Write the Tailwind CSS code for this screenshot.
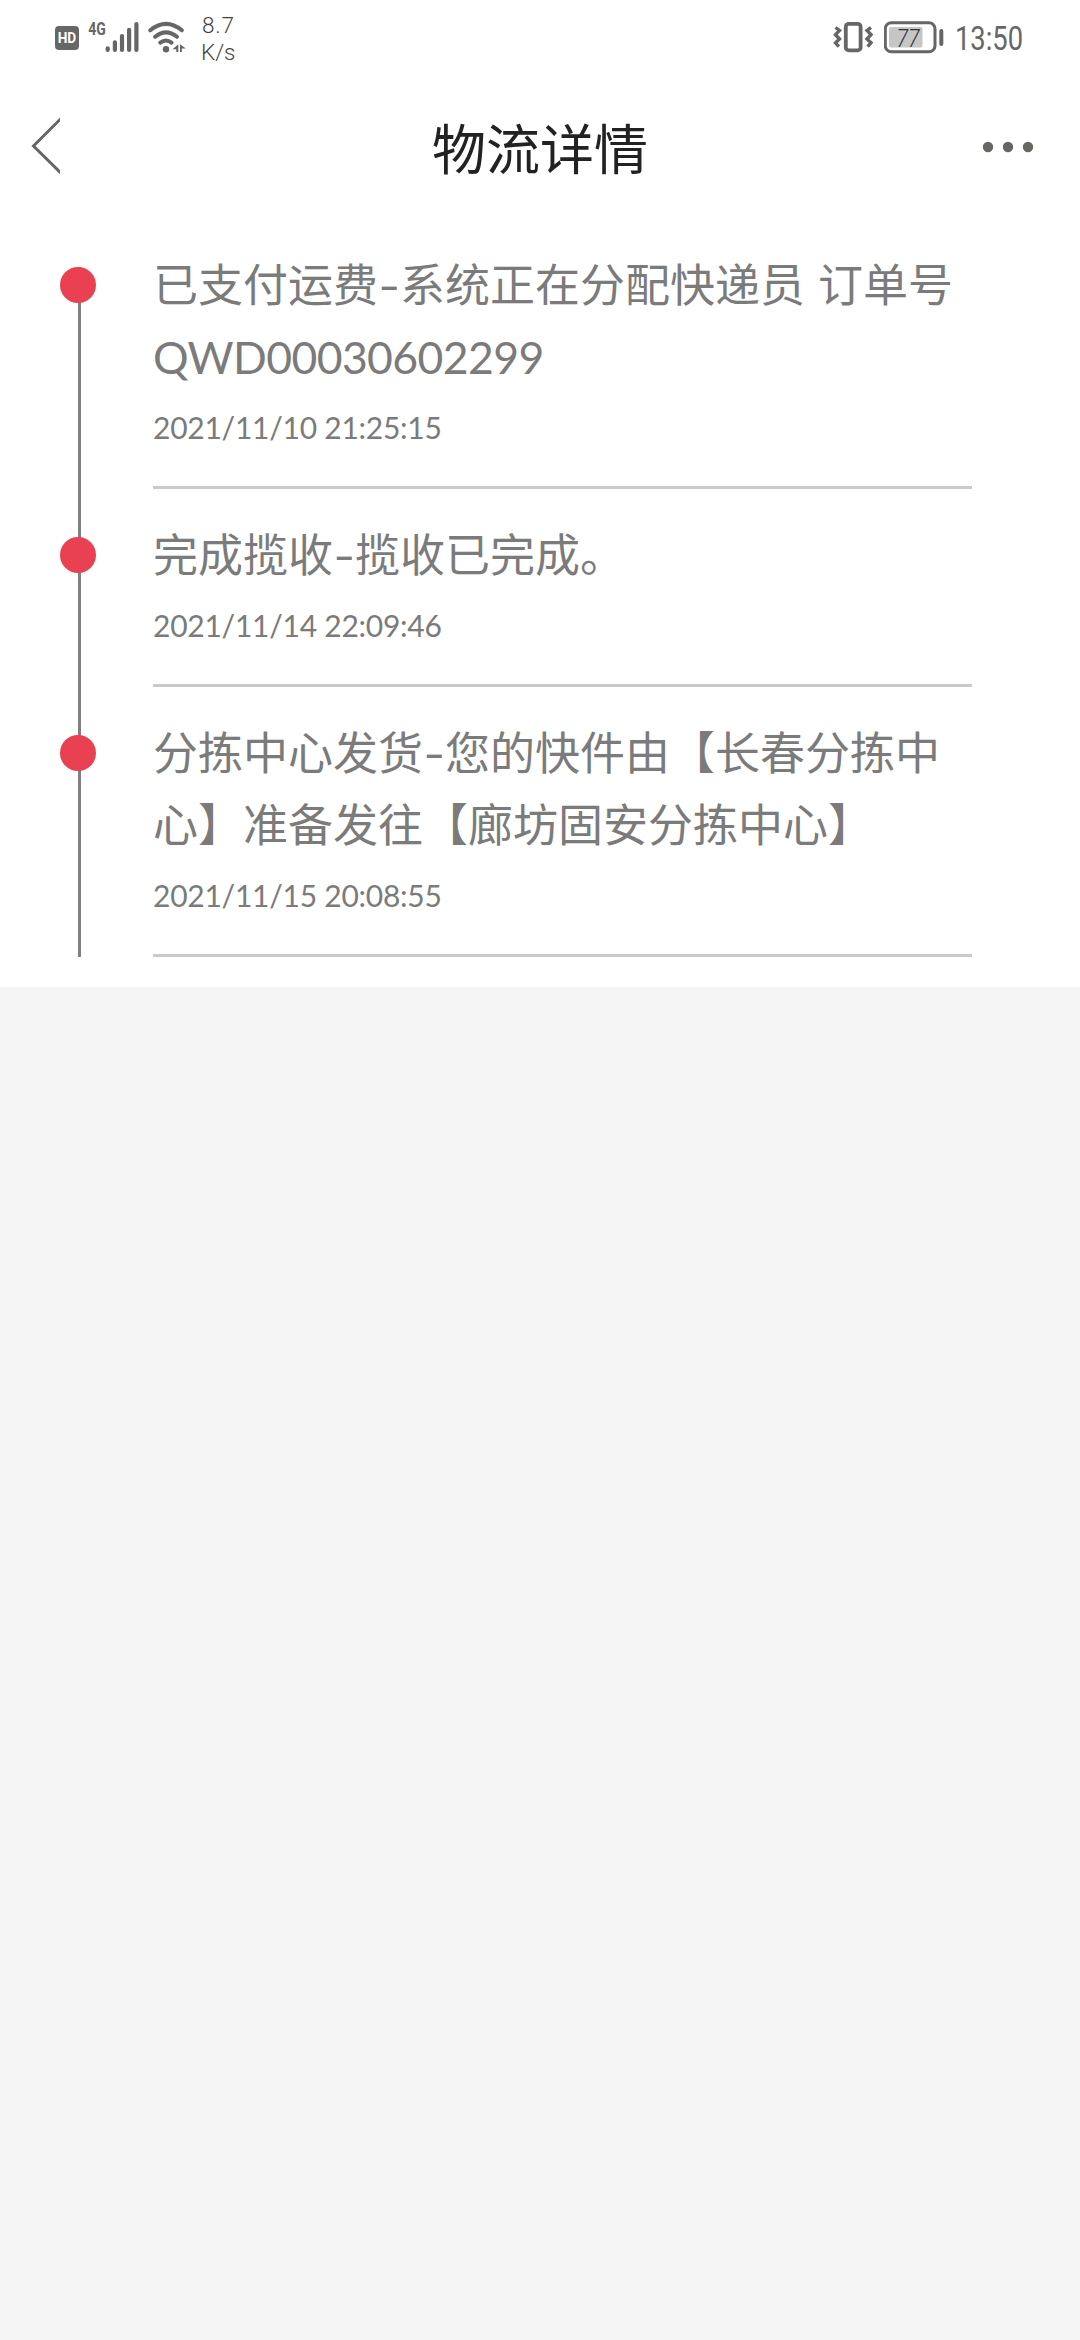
<!DOCTYPE html>
<html lang="zh-CN">
<head>
<meta charset="utf-8">
<title>物流详情</title>
<script src="https://cdn.jsdelivr.net/npm/@tailwindcss/browser@4"></script>
</head>
<body class="w-[1080px] h-[2340px] overflow-hidden bg-[#f5f5f5] font-['Lato','Noto_Sans_CJK_SC',sans-serif]">
<div class="h-[987px] bg-white">
  <!-- status bar -->
  <div class="flex h-[84px] justify-between pl-[55px] pr-[50px]">
    <div class="flex">
      <svg class="w-[24px] h-[84px]" viewBox="55 0 24 84"><rect x="55" y="26" width="24" height="24" rx="4" fill="#666"/><text x="57.7" y="43.4" textLength="18.6" lengthAdjust="spacingAndGlyphs" font-family="Roboto" font-weight="700" font-size="15" fill="#fff">HD</text></svg>
      <svg class="ml-[9px] w-[52px] h-[84px]" viewBox="88 0 52 84"><text x="88.3" y="35.4" textLength="17.6" lengthAdjust="spacingAndGlyphs" font-family="Roboto" font-weight="700" font-size="18.5" fill="#666">4G</text>
        <g stroke="#666" stroke-width="4.2" stroke-linecap="round"><path d="M107.7 48.3v1.6M114.9 42.3v7.6M122 36v13.9M129.1 29.8v20.1M136.4 24v25.9"/></g></svg>
      <svg class="ml-[8px] w-[40px] h-[84px]" viewBox="148 0 40 84"><g fill="none" stroke="#666" stroke-width="4" stroke-linecap="round"><path d="M150.3 30.2Q166 17.500 181.800 30.200M155.200 36.800Q166 28 176.900 36.800M160.300 42.600Q166 38.300 171.500 42.600"/></g><circle cx="166" cy="49.200" r="3.200" fill="#666"/><path d="M172.500 49.300l5.800-5v7.800h-2v-2.800zM180 44.300l5.800 4.200h-4v3.600H180z" fill="#666"/></svg>
      <svg class="ml-[12px] w-[40px] h-[84px]" viewBox="200 0 40 84" font-family="Roboto" font-weight="300" font-size="22.500" fill="#444"><text x="202" y="32.900" textLength="32" lengthAdjust="spacing">8.7</text><text x="201" y="59.900" textLength="34.500" lengthAdjust="spacing">K/s</text></svg>
    </div>
    <div class="flex">
      <svg class="w-[40px] h-[84px]" viewBox="833 0 40 84" fill="none" stroke="#666"><rect x="845.800" y="23.800" width="14.800" height="26.600" rx="3" stroke-width="3.800"/><path d="M835.500 27.500l4 3-4 4.200 4 4.300-4 3.800 3.400 3.800M871 27.500l-4 3 4 4.200-4 4.300 4 3.800-3.400 3.800" stroke-width="3.400"/></svg>
      <svg class="ml-[11px] w-[60px] h-[84px]" viewBox="884 0 60 84"><rect x="885.300" y="22.800" width="49.700" height="29" rx="6" fill="none" stroke="#666" stroke-width="3"/><rect x="889" y="27" width="33.500" height="20.500" rx="2" fill="#c6c6c6"/><rect x="939.300" y="29" width="4" height="17" rx="2" fill="#666"/><text x="896.500" y="46.600" textLength="23" lengthAdjust="spacingAndGlyphs" font-family="Roboto" font-weight="300" font-style="italic" font-size="26" fill="#333">77</text></svg>
      <svg class="ml-[9px] w-[77px] h-[84px]" viewBox="953 0 77 84"><text x="955" y="50" textLength="68" lengthAdjust="spacingAndGlyphs" font-family="Roboto" font-size="34" fill="#666">13:50</text></svg>
    </div>
  </div>
  <!-- title bar -->
  <div class="grid h-[132px] grid-cols-[120px_1fr_120px] items-center">
    <svg class="w-[60px] h-[132px]" viewBox="0 84 60 132"><path d="M63 116.500L33.500 146 63 175" fill="none" stroke="#666" stroke-width="3"/></svg>
    <h1 class="text-center text-[54px] leading-[72px] text-[#222]">物流详情</h1>
    <svg class="w-[120px] h-[132px]" viewBox="960 84 120 132" fill="#666662"><circle cx="988" cy="147" r="5.200"/><circle cx="1008" cy="147" r="5.200"/><circle cx="1028" cy="147" r="5.200"/></svg>
  </div>
  <!-- shipment timeline -->
  <ol class="pt-[33px] text-[#7b7b7b]">
    <li class="flex h-[270px] pl-[60px]">
      <div class="relative w-[93px]"><div class="absolute left-[18px] top-[18px] h-[270px] w-[3px] bg-[#808080]"></div><div class="relative mt-[18px] size-9 rounded-full bg-[#e94052]"></div></div>
      <div class="h-[240px] w-[819px] border-b-[3px] border-[#cacaca]">
        <p class="text-[45px] leading-[72px] whitespace-nowrap">已支付运费<span class="inline-block w-[22px] text-center"><span class="inline-block scale-x-[1.35]">-</span></span>系统正在分配快递员<span class="inline-block w-[13px]"></span>订单号<br><span class="text-[44.5px] tracking-[-0.6px]">QWD00030602299</span></p>
        <p class="pt-[12px] text-[30px] leading-[45px] tracking-[-0.25px]">2021/11/10 21:25:15</p>
      </div>
    </li>
    <li class="flex h-[198px] pl-[60px]">
      <div class="relative w-[93px]"><div class="absolute left-[18px] top-0 h-[216px] w-[3px] bg-[#808080]"></div><div class="relative mt-[18px] size-9 rounded-full bg-[#e94052]"></div></div>
      <div class="h-[168px] w-[819px] border-b-[3px] border-[#cacaca]">
        <p class="text-[45px] leading-[72px] whitespace-nowrap">完成揽收<span class="inline-block w-[22px] text-center"><span class="inline-block scale-x-[1.35]">-</span></span>揽收已完成。</p>
        <p class="pt-[12px] text-[30px] leading-[45px] tracking-[-0.25px]">2021/11/14 22:09:46</p>
      </div>
    </li>
    <li class="flex h-[270px] pl-[60px]">
      <div class="relative w-[93px]"><div class="absolute left-[18px] top-0 h-[240px] w-[3px] bg-[#808080]"></div><div class="relative mt-[18px] size-9 rounded-full bg-[#e94052]"></div></div>
      <div class="h-[240px] w-[819px] border-b-[3px] border-[#cacaca]">
        <p class="text-[45px] leading-[72px] whitespace-nowrap">分拣中心发货<span class="inline-block w-[22px] text-center"><span class="inline-block scale-x-[1.35]">-</span></span>您的快件由【长春分拣中<br>心】准备发往【廊坊固安分拣中心】</p>
        <p class="pt-[12px] text-[30px] leading-[45px] tracking-[-0.25px]">2021/11/15 20:08:55</p>
      </div>
    </li>
  </ol>
</div>
</body>
</html>
